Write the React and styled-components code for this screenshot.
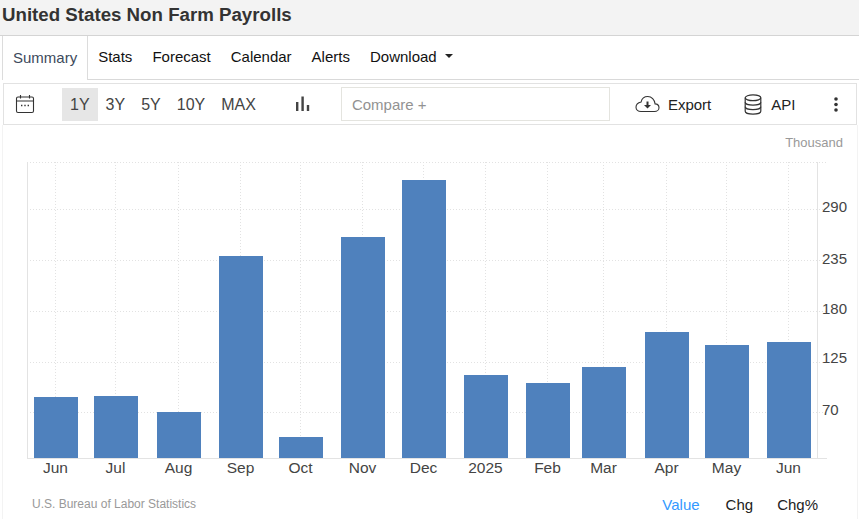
import React from "react";
import styled, { createGlobalStyle } from "styled-components";

const GlobalStyle = createGlobalStyle`
  html, body {
    margin: 0;
    padding: 0;
    background: #fff;
    font-family: "Liberation Sans", Arial, sans-serif;
    color: #333;
  }
`;

const Page = styled.div`
  width: 859px;
  height: 519px;
  overflow: hidden;
  display: flex;
  flex-direction: column;
`;

const TitleBar = styled.div`
  height: 35px;
  background: #f3f3f3;
  border-bottom: 1px solid #d4d4d4;
  padding-left: 2px;
  display: flex;
  align-items: center;
  flex-shrink: 0;
`;

const Title = styled.h1`
  margin: 0 0 6px;
  font-size: 18.7px;
  font-weight: 700;
  color: #333;
`;

const Tabs = styled.div`
  height: 43px;
  margin-left: 2px;
  border-bottom: 1px solid #d9d9d9;
  display: flex;
  flex-shrink: 0;
`;

const Tab = styled.div`
  height: ${(p) => (p.$active ? "44px" : "43px")};
  box-sizing: border-box;
  padding: 0 10px 2px;
  display: flex;
  align-items: center;
  gap: 8px;
  font-size: 15px;
  color: ${(p) => (p.$active ? "#3d4a5c" : "#111")};
  background: #fff;
  border-left: ${(p) => (p.$active ? "1px solid #dcdcdc" : "none")};
  border-right: ${(p) => (p.$active ? "1px solid #dcdcdc" : "none")};
`;

const Caret = styled.span`
  width: 0;
  height: 0;
  margin-bottom: 1px;
  border-left: 4px solid transparent;
  border-right: 4px solid transparent;
  border-top: 4px solid #222;
`;

const Toolbar = styled.div`
  height: 40px;
  margin: 3px 2px 0 3px;
  border: 1px solid #e2e2e2;
  display: flex;
  align-items: center;
  flex-shrink: 0;
`;

const IconSlot = styled.div`
  display: flex;
  align-items: center;
  margin-left: ${(p) => p.$left || 0}px;
  color: #333;
`;

const RangeGroup = styled.div`
  display: flex;
  margin-left: 27px;
`;

const RangeButton = styled.div`
  height: 33px;
  box-sizing: border-box;
  padding: 2px 8px 0;
  display: flex;
  align-items: center;
  font-size: 16px;
  color: #444;
  background: ${(p) => (p.$active ? "#e6e6e6" : "transparent")};
`;

const CompareInput = styled.input`
  width: 269px;
  height: 34px;
  margin-left: 31px;
  padding: 0 10px;
  box-sizing: border-box;
  border: 1px solid #e4e4df;
  outline: none;
  font-family: inherit;
  font-size: 15px;
  color: #444;
  &::placeholder {
    color: #929292;
    opacity: 1;
  }
`;

const ToolLabel = styled.span`
  margin-left: ${(p) => p.$left}px;
  font-size: 15px;
  color: #222;
`;

const ChartPanel = styled.div`
  flex: 1;
  margin-left: 2px;
  margin-right: 1px;
  border-left: 1px solid #f3f3f3;
  border-right: 1px solid #f3f3f3;
  display: flex;
  flex-direction: column;
  min-height: 0;
`;

const UnitLabel = styled.div`
  height: 37px;
  flex-shrink: 0;
  padding: 0 14px 2px 0;
  box-sizing: border-box;
  display: flex;
  align-items: center;
  justify-content: flex-end;
  font-size: 13px;
  color: #999;
`;

const ChartSvg = styled.svg`
  display: block;
  margin-left: -3px;
  flex-shrink: 0;
`;

const AxisText = styled.text`
  font-family: "Liberation Sans", Arial, sans-serif;
  font-size: ${(p) => p.$size}px;
  fill: #444;
`;

const Footer = styled.div`
  display: flex;
  align-items: center;
  justify-content: space-between;
  height: 24px;
  padding: 0 39px 0 29px;
  margin-top: 10px;
  flex-shrink: 0;
`;

const Source = styled.span`
  font-size: 12px;
  color: #999;
`;

const Modes = styled.div`
  display: flex;
  gap: 24px;
`;

const Mode = styled.span`
  font-size: 15px;
  margin-right: ${(p) => (p.$active ? "2px" : "0")};
  color: ${(p) => (p.$active ? "#3399ff" : "#222")};
`;

const bars = [
  { label: "Jun", x: 34, top: 397 },
  { label: "Jul", x: 94, top: 396 },
  { label: "Aug", x: 157, top: 412 },
  { label: "Sep", x: 219, top: 256 },
  { label: "Oct", x: 279, top: 437 },
  { label: "Nov", x: 341, top: 237 },
  { label: "Dec", x: 402, top: 180 },
  { label: "2025", x: 464, top: 375 },
  { label: "Feb", x: 526, top: 383 },
  { label: "Mar", x: 582, top: 367 },
  { label: "Apr", x: 645, top: 332 },
  { label: "May", x: 705, top: 345 },
  { label: "Jun", x: 767, top: 342 },
];

const gridRows = [162.5, 209.5, 260.5, 311.5, 362.5, 412.5];
const yLabels = [
  { value: 290, y: 212 },
  { value: 235, y: 264 },
  { value: 180, y: 314 },
  { value: 125, y: 363 },
  { value: 70, y: 415 },
];

const CHART_TOP = 162;
const CHART_HEIGHT = 320;
const BASE = 458;
const BAR_WIDTH = 44;

const Chart = () => (
  <ChartSvg width={859} height={CHART_HEIGHT} viewBox={`0 ${CHART_TOP} 859 ${CHART_HEIGHT}`}>
    {gridRows.map((y) => (
      <line key={y} x1={27} x2={827} y1={y} y2={y} stroke="#e2e2e2" strokeDasharray="1 2" />
    ))}
    {bars.map((b) => (
      <line
        key={b.x}
        x1={b.x + BAR_WIDTH / 2 - 0.5}
        x2={b.x + BAR_WIDTH / 2 - 0.5}
        y1={162}
        y2={BASE}
        stroke="#e2e2e2"
        strokeDasharray="1 2"
      />
    ))}
    <line x1={27.5} x2={27.5} y1={162} y2={BASE} stroke="#e3e3e3" />
    <line x1={817.5} x2={817.5} y1={162} y2={BASE} stroke="#e3e3e3" />
    <line x1={27} x2={827} y1={458.5} y2={458.5} stroke="#e3e3e3" />
    {bars.map((b) => (
      <rect key={b.x} x={b.x} y={b.top} width={BAR_WIDTH} height={BASE - b.top} fill="#4f81bd" />
    ))}
    {bars.map((b) => (
      <AxisText key={b.x} $size={15.5} x={b.x + BAR_WIDTH / 2 - 0.5} y={473} textAnchor="middle">
        {b.label}
      </AxisText>
    ))}
    {yLabels.map((l) => (
      <AxisText key={l.value} $size={15} x={822} y={l.y}>
        {l.value}
      </AxisText>
    ))}
  </ChartSvg>
);

const CalendarIcon = () => (
  <svg width="20" height="20" viewBox="0 0 20 20" fill="none" stroke="#333" strokeWidth="1.1">
    <rect x="1.5" y="3" width="17" height="15.5" rx="1.5" />
    <path d="M1.5 7h17M5.5 1v3.5M14.5 1v3.5" />
    <path d="M6 11.5h1.4M9.3 11.5h1.4M12.6 11.5H14" strokeWidth="1.6" />
  </svg>
);

const BarsIcon = () => (
  <svg width="16" height="16" viewBox="0 0 16 16" fill="#444">
    <rect x="2" y="6" width="2.4" height="9" />
    <rect x="7.400" y="0.5" width="2.4" height="14.5" />
    <rect x="12.800" y="9" width="2.4" height="6" />
  </svg>
);

const CloudIcon = () => (
  <svg width="25" height="18" viewBox="0 0 25 18" fill="none" stroke="#333" strokeWidth="1.1">
    <path d="M6 16.5h13.5c2.500 0 4.500-1.600 4.500-3.800 0-2.100-1.700-3.700-3.900-3.800C19.600 4.600 16.600 1.500 12.800 1.500c-3.300 0-6 2.300-6.700 5.500C3.200 7.700 1 9.700 1 12.300c0 2.400 2.100 4.200 5 4.200z" />
    <path d="M12.500 6.500v4.500" strokeWidth="2" />
    <path d="M9 10h7l-3.500 3.500z" fill="#333" stroke="none" />
  </svg>
);

const DatabaseIcon = () => (
  <svg width="18" height="21" viewBox="0 0 18 21" fill="none" stroke="#333" strokeWidth="1.2">
    <ellipse cx="9" cy="3.800" rx="7.800" ry="2.900" />
    <path d="M1.200 3.800v13.400c0 1.600 3.500 2.900 7.800 2.900s7.800-1.300 7.800-2.900V3.800" />
    <path d="M1.200 8.300c0 1.600 3.500 2.900 7.800 2.900s7.800-1.300 7.800-2.900" />
    <path d="M1.200 12.800c0 1.600 3.500 2.900 7.800 2.900s7.800-1.300 7.800-2.900" />
  </svg>
);

const KebabIcon = () => (
  <svg width="4" height="15" viewBox="0 0 4 15" fill="#333">
    <circle cx="2" cy="2" r="1.800" />
    <circle cx="2" cy="7.500" r="1.800" />
    <circle cx="2" cy="13" r="1.800" />
  </svg>
);

const tabs = ["Stats", "Forecast", "Calendar", "Alerts"];
const ranges = ["1Y", "3Y", "5Y", "10Y", "MAX"];

export default function App() {
  return (
    <Page>
      <GlobalStyle />
      <TitleBar>
        <Title>United States Non Farm Payrolls</Title>
      </TitleBar>
      <Tabs>
        <Tab $active>Summary</Tab>
        {tabs.map((t) => (
          <Tab key={t}>{t}</Tab>
        ))}
        <Tab>
          Download <Caret />
        </Tab>
      </Tabs>
      <Toolbar>
        <IconSlot $left={11}>
          <CalendarIcon />
        </IconSlot>
        <RangeGroup>
          {ranges.map((r) => (
            <RangeButton key={r} $active={r === "1Y"}>
              {r}
            </RangeButton>
          ))}
        </RangeGroup>
        <IconSlot $left={30}>
          <BarsIcon />
        </IconSlot>
        <CompareInput placeholder="Compare +" readOnly />
        <IconSlot $left={25}>
          <CloudIcon />
        </IconSlot>
        <ToolLabel $left={8}>Export</ToolLabel>
        <IconSlot $left={33}>
          <DatabaseIcon />
        </IconSlot>
        <ToolLabel $left={9}>API</ToolLabel>
        <IconSlot $left={39}>
          <KebabIcon />
        </IconSlot>
      </Toolbar>
      <ChartPanel>
        <UnitLabel>Thousand</UnitLabel>
        <Chart />
        <Footer>
          <Source>U.S. Bureau of Labor Statistics</Source>
          <Modes>
            <Mode $active>Value</Mode>
            <Mode>Chg</Mode>
            <Mode>Chg%</Mode>
          </Modes>
        </Footer>
      </ChartPanel>
    </Page>
  );
}
